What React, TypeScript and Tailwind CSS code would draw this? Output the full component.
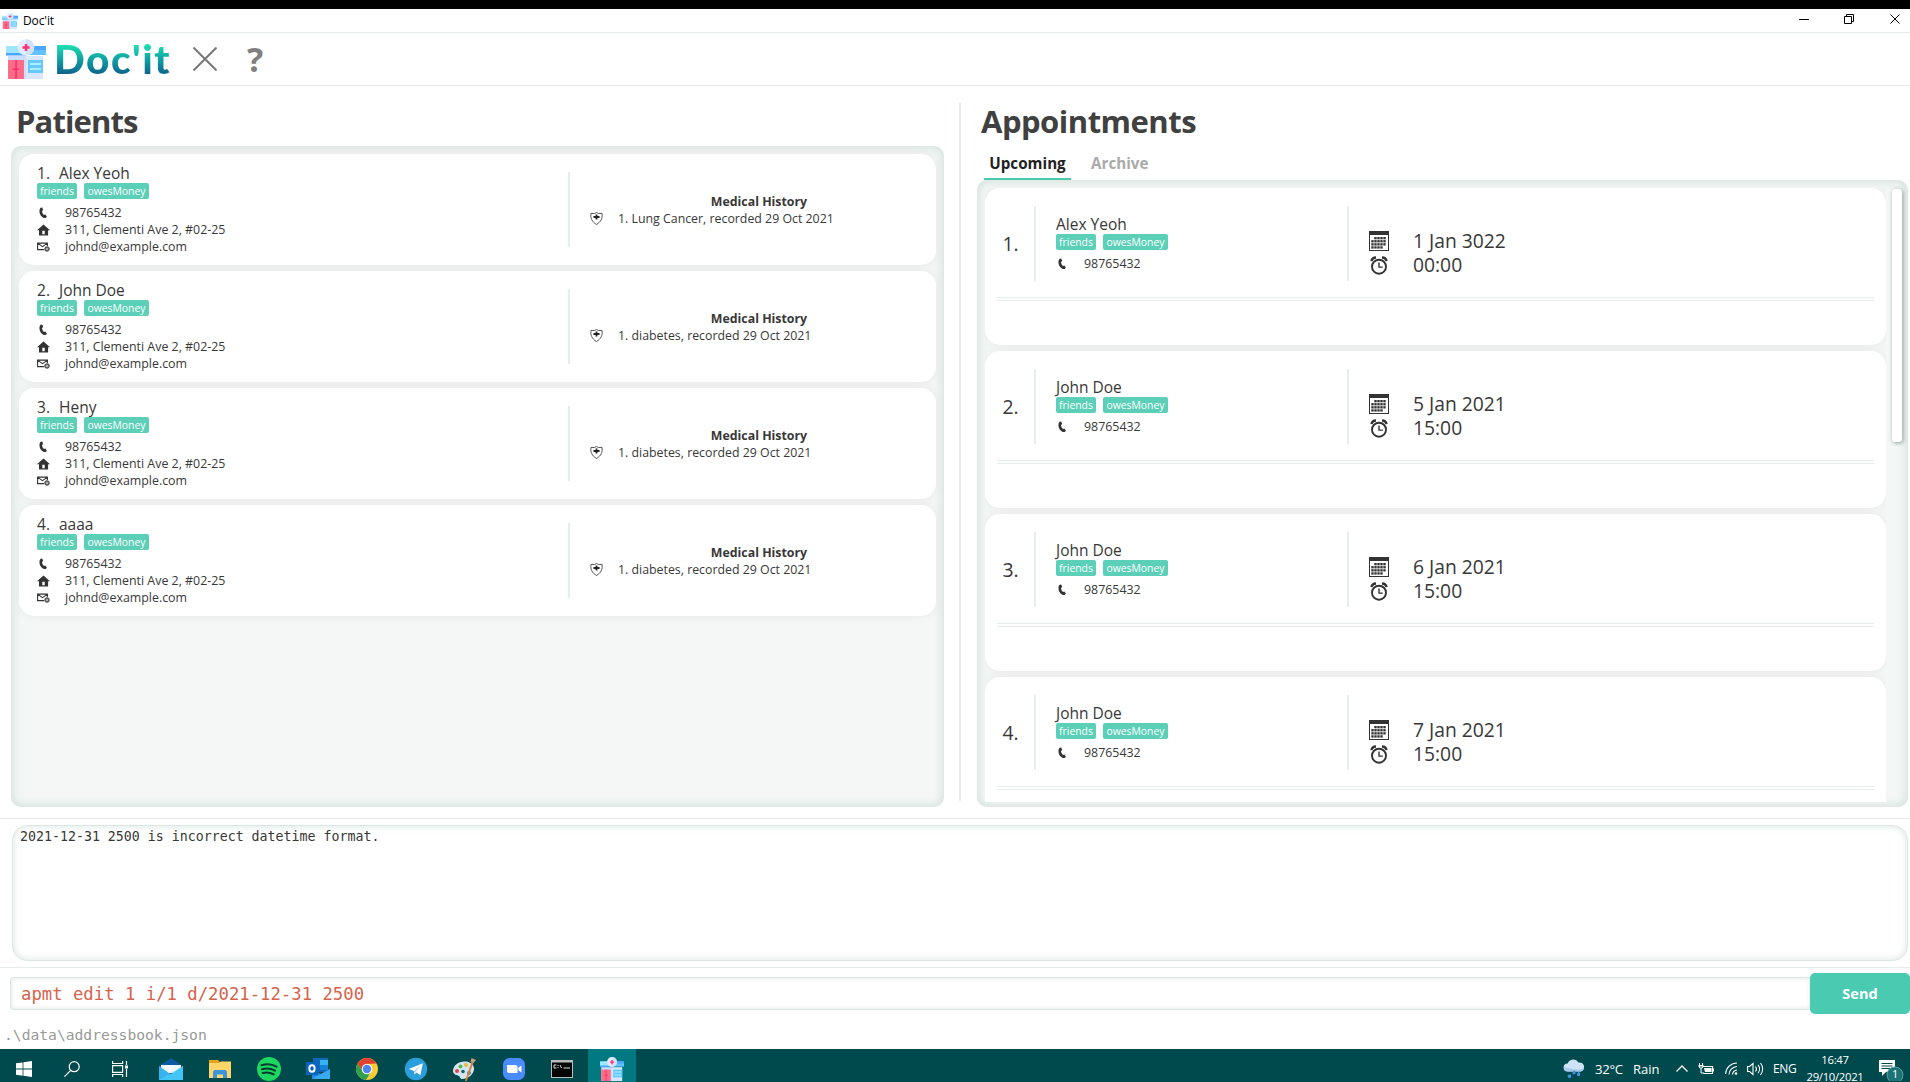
import React from "react";

const SANS = "font-['Open_Sans','Noto_Sans',sans-serif]";

const patients = [
  { name: "Alex Yeoh", history: "Lung Cancer, recorded 29 Oct 2021" },
  { name: "John Doe", history: "diabetes, recorded 29 Oct 2021" },
  { name: "Heny", history: "diabetes, recorded 29 Oct 2021" },
  { name: "aaaa", history: "diabetes, recorded 29 Oct 2021" },
];

const appointments = [
  { name: "Alex Yeoh", date: "1 Jan 3022", time: "00:00" },
  { name: "John Doe", date: "5 Jan 2021", time: "15:00" },
  { name: "John Doe", date: "6 Jan 2021", time: "15:00" },
  { name: "John Doe", date: "7 Jan 2021", time: "15:00" },
];

function ClinicIcon({ className }: { className: string }) {
  return (
    <svg viewBox="0 0 40 40" className={className}>
      <path d="M2 17h18v23H2z" fill="#c9deff" />
      <path d="M20 17h17v23H20z" fill="#d9e7fd" />
      <path d="M2 21h16v19H2z" fill="#ff6c87" />
      <path d="M9.3 21h1.600v19H9.300z" fill="#ff2f70" />
      <path d="M7 29.300h6v1.800H7z" fill="#ff2f70" />
      <path d="M22 21h15v13H22z" fill="#66c8ff" />
      <path d="M24 24h11v2H24zM24 29h11v2H24z" fill="#a9f0ff" />
      <path d="M0 7h20v9H0z" fill="#9fe6ff" />
      <path d="M20 7h20v9H20z" fill="#62c2ff" />
      <path d="M0 14h20v2.500H0zM20 7h20v4H20z" fill="#4aa5fb" />
      <circle cx="20" cy="8.400" r="8.200" fill="#e1ecff" />
      <path d="M20 .2a8.200 8.200 0 0 1 0 16.400z" fill="#cfe0fb" />
      <path d="M18.800 5h2.400v7h-2.400zM16.500 7.300h7v2.400h-7z" fill="#ff2f70" />
    </svg>
  );
}

function PhoneIcon() {
  return (
    <svg viewBox="0 0 12 12" className="h-3 w-3" fill="#333">
      <path d="M3.600.8 5.200.4l1 2.700-1.200 1c.1 1.500.8 2.900 1.900 3.900l1.500-.4 1.500 2.100-1.200 1.400C5.600 11.200 2.600 8.300 2.500 4.400 2.400 2.900 2.800 1.500 3.600.8z" />
    </svg>
  );
}

function HouseIcon() {
  return (
    <svg viewBox="0 0 13 12" className="h-3 w-[13px]" fill="#333">
      <path d="M6.500.4 13 6.200h-1.900v5.300H2V6.200H0zM5.300 6.700v3.600h2.400V6.700z" fillRule="evenodd" />
    </svg>
  );
}

function MailIcon() {
  return (
    <svg viewBox="0 0 13 10" className="h-[10px] w-[13px]" fill="none" stroke="#333">
      <path d="M7 7.600H.6V1.100h9.800v3M.8 1.400l4.700 3.300 4.700-3.300" strokeWidth="1.100" />
      <circle cx="10" cy="7" r="2.300" fill="#777" strokeWidth=".8" />
      <circle cx="10" cy="7" r=".6" fill="#fff" stroke="#fff" strokeWidth=".3" />
    </svg>
  );
}

function ShieldIcon() {
  return (
    <svg viewBox="0 0 13 13" className="h-[13px] w-[13px]" fill="none">
      <path d="M6.500.5 8.500 1.500 12 1.400c.8 4.600-1 8.600-5.500 11.100C2 10 .2 6 1 1.400l3.500.1z" stroke="#444" strokeWidth=".9" />
      <path d="M5.600 2.500h1.800v1.600H9.500v1.800H7.400v1.700H5.600V5.900H3.500V4.100h2.100z" fill="#222" />
    </svg>
  );
}

function CalendarIcon() {
  const rows = [
    [6, 9, 12, 15],
    [3, 6, 9, 12, 15],
    [3, 6, 9, 12, 15],
    [3, 6, 9, 12],
  ];
  return (
    <svg viewBox="0 0 20 20" className="h-5 w-5" fill="#333">
      <path d="M0 0h20v20H0zM1 4v15h18V4z" fillRule="evenodd" />
      {rows.map((cols, r) =>
        cols.map((x) => <rect key={`${r}-${x}`} x={x - 0.7} y={6 + r * 3.1} width="2.400" height="2.300" />)
      )}
    </svg>
  );
}

function ClockIcon() {
  return (
    <svg viewBox="0 0 18 19" className="h-[19px] w-[18px]" fill="none" stroke="#333">
      <circle cx="9" cy="10.700" r="7" strokeWidth="1.900" />
      <path d="M9 6.500v4.600h3.800" strokeWidth="1.400" />
      <path d="M1.500 5.200C1.800 3 3.500 1.500 6 1.500M16.500 5.200C16.200 3 14.500 1.500 12 1.500" strokeWidth="2.400" />
    </svg>
  );
}

function Tags() {
  return (
    <div className="flex h-4 gap-[7px] text-[10.400px] leading-4 text-white">
      <span className="w-10 rounded-[2px] bg-[#5bcfb8] text-center">friends</span>
      <span className="w-[65px] rounded-[2px] bg-[#5bcfb8] text-center">owesMoney</span>
    </div>
  );
}

function Field({ icon, children }: { icon: React.ReactNode; children: React.ReactNode }) {
  return (
    <div className="flex h-[17px] items-center text-[12.400px] leading-[17px]">
      <span className="flex w-7 items-center">{icon}</span>
      <span>{children}</span>
    </div>
  );
}

function PatientCard({ index, name, history }: { index: number; name: string; history: string }) {
  return (
    <div className="flex h-[111px] shrink-0 rounded-[15px] bg-white pl-[18px] shadow-[0_0_10px_#e6e8e7]">
      <div className="w-[531px] pt-[9px]">
        <div className="flex text-[15.500px] leading-5">
          <span className="w-[22px]">{index}.</span>
          <span>{name}</span>
        </div>
        <Tags />
        <div className="mt-[5px]">
          <Field icon={<PhoneIcon />}>98765432</Field>
          <Field icon={<HouseIcon />}>311, Clementi Ave 2, #02-25</Field>
          <Field icon={<MailIcon />}>johnd@example.com</Field>
        </div>
      </div>
      <div className="mt-[18px] h-[75px] w-[2px] bg-[#e6eeeb]" />
      <div className="ml-5 flex w-[338px] flex-col justify-center pt-px text-[12.350px] leading-[17.330px]">
        <div className="text-center font-bold">Medical History</div>
        <div className="flex items-center">
          <span className="w-7">
            <ShieldIcon />
          </span>
          <span>1. {history}</span>
        </div>
      </div>
    </div>
  );
}

function AppointmentCard({ index, name, date, time }: { index: number; name: string; date: string; time: string }) {
  return (
    <div className="h-[157px] shrink-0 rounded-[15px] bg-white px-3 shadow-[0_0_10px_#e6e8e7]">
      <div className="flex h-[109px] pt-[18px]">
        <div className="flex h-[75px] w-[37px] items-center pt-px pl-[5.500px] text-[19.400px]">{index}.</div>
        <div className="h-[75px] w-[2px] bg-[#e6eeeb]" />
        <div className="h-[75px] w-[311px] pt-2 pl-5">
          <div className="text-[15.500px] leading-5">{name}</div>
          <Tags />
          <div className="mt-[5px]">
            <Field icon={<PhoneIcon />}>98765432</Field>
          </div>
        </div>
        <div className="h-[75px] w-[2px] bg-[#e6eeeb]" />
        <div className="pt-[23px] pl-5 text-[19.300px] leading-6">
          <div className="flex h-6 items-center">
            <span className="w-11">
              <CalendarIcon />
            </span>
            {date}
          </div>
          <div className="flex h-6 items-center">
            <span className="w-11 pl-px">
              <ClockIcon />
            </span>
            {time}
          </div>
        </div>
      </div>
      <div className="h-1 border-y border-[#e6eeeb]" />
    </div>
  );
}

const PANEL =
  "flex flex-col gap-1.5 overflow-hidden rounded-[10px] bg-[#f4f7f6] p-2 shadow-[inset_0_0_10px_2px_#d3e1dc]";

function TitleBar() {
  return (
    <header className="flex h-6 items-center border-b border-[#e4ecea] pl-0.5">
      <ClinicIcon className="h-4 w-4" />
      <span className="ml-[5px] text-[12px] tracking-[-0.100px] text-black">Doc'it</span>
      <svg viewBox="0 0 102 12" className="mr-[9px] mb-[3px] ml-auto h-3 w-[102px]" fill="none" stroke="#000">
        <path d="M0 6.500h10M45.500 3.500h7v7h-7zM47.500 3.500v-2h7v7h-2" />
        <path d="m91.500 1.500 9 9M100.500 1.500l-9 9" />
      </svg>
    </header>
  );
}

function Toolbar() {
  return (
    <div className="flex h-[53px] items-center border-b border-[#e8eceb] pl-1.5">
      <ClinicIcon className="h-10 w-10" />
      <div className="ml-2 w-[123px] bg-linear-to-b from-[#1fdfb3] from-20% to-[#0f5f8b] to-85% bg-clip-text font-['Lato',sans-serif] text-[40.500px] leading-[46px] font-black tracking-[1.500px] text-transparent">
        Doc'it
      </div>
      <svg viewBox="0 0 24 24" className="ml-4 h-6 w-6" stroke="#777" strokeWidth="2">
        <path d="m.5.5 23 23M23.500.5l-23 23" />
      </svg>
      <span className="ml-[30px] text-[34px] leading-none font-bold text-[#808080]">?</span>
    </div>
  );
}

function TaskIcon({ children }: { children: React.ReactNode }) {
  return (
    <div className="flex w-12 justify-center">
      <svg viewBox="0 0 24 24" className="h-6 w-6" fill="none">
        {children}
      </svg>
    </div>
  );
}

function Taskbar() {
  return (
    <footer className="flex h-[33px] items-center overflow-hidden bg-[#00494d] pt-[7px] text-white">
      <div className="flex w-12 justify-center">
        <svg viewBox="0 0 16 16" className="h-4 w-4" fill="#fff">
          <path d="M0 2.300 6.600 1.400v6.200H0zM7.400 1.300 16 0v7.600H7.400zM0 8.400h6.600v6.300L0 13.800zM7.400 8.400H16V16l-8.600-1.200z" />
        </svg>
      </div>
      <div className="flex w-12 justify-center">
        <svg viewBox="0 0 16 16" className="h-4 w-4" fill="none" stroke="#fff" strokeWidth="1.200">
          <circle cx="10.200" cy="5.700" r="5" />
          <path d="M6.700 9.300.4 15.600" />
        </svg>
      </div>
      <div className="flex w-12 justify-center">
        <svg viewBox="0 0 16 16" className="h-4 w-4" fill="none" stroke="#fff" strokeWidth="1.200">
          <path d="M.6 0v2.500h10V0M.6 16v-2.500h10V16M.6 4.600h10v6.800H.6zM14.500 0v4M14.500 8v8" />
          <path d="M13 4.500h3v3h-3z" fill="#fff" stroke="none" />
        </svg>
      </div>
      <div className="w-[3px]" />
      <TaskIcon>
        <path d="M0 9 12 1l12 8v3H0z" fill="#0c59a4" />
        <path d="M2 8h20v8H2z" fill="#f4f7fa" />
        <path d="M0 9l12 8.500L24 9v14H0z" fill="#36b3f0" />
        <path d="M0 23 24 9v14z" fill="#4fd0fb" opacity=".6" />
      </TaskIcon>
      <div className="w-px" />
      <TaskIcon>
        <path d="M1 3h9l2 2h11v16H1z" fill="#e4a31c" />
        <path d="M1 6h10l2-1.500h10V21H1z" fill="#fdd56b" />
        <path d="M5 21v-6.500l1.500-1.500h11l1.500 1.500V21h-4v-3.500H9V21z" fill="#3c95dc" />
      </TaskIcon>
      <div className="w-px" />
      <TaskIcon>
        <circle cx="12" cy="12" r="12" fill="#1ed760" />
        <path d="M4.500 8.200c5-1.500 11-1 15 1.400M5 12.200c4.500-1.200 9-.8 13 1.400M5.600 16c4-1 7.500-.6 11 1.200" stroke="#003a30" strokeWidth="2.100" strokeLinecap="round" />
      </TaskIcon>
      <div className="w-px" />
      <TaskIcon>
        <path d="M7 1h15v14H7z" fill="#1266b8" />
        <path d="M14 3h8v5h-8z" fill="#37b2f3" />
        <path d="M14 8h8v5h-8z" fill="#1783d8" />
        <path d="M6 12l9 5 9-5v10H6z" fill="#1c8ae0" />
        <path d="m6 22 18-10v10z" fill="#39a9f0" />
        <path d="M0 5h12v13H0z" fill="#0a64bd" />
        <ellipse cx="6" cy="11.500" rx="2.700" ry="3.300" stroke="#fff" strokeWidth="1.900" />
      </TaskIcon>
      <div className="w-px" />
      <TaskIcon>
        <circle cx="12" cy="12" r="11" fill="#f9cb34" />
        <path d="M2.500 6.500A11 11 0 0 1 21.500 6.500L12 7l-5 7z" fill="#e0432f" />
        <path d="M2.500 6.500A11 11 0 0 0 11 23l5-8.500-8.500-.5z" fill="#2fa14f" />
        <circle cx="12" cy="12" r="5.300" fill="#fff" />
        <circle cx="12" cy="12" r="4.200" fill="#4a86ee" />
      </TaskIcon>
      <div className="w-px" />
      <TaskIcon>
        <circle cx="12" cy="12" r="11.200" fill="#2a9fdb" />
        <path d="M4.800 12 18.800 6.300 16.400 18.200l-3.900-2.700-2 2-.6-3.400z" fill="#fff" />
        <path d="m9.900 14.100 6.800-6-4.900 6.800-1.300 2.600z" fill="#bcd9ea" />
      </TaskIcon>
      <TaskIcon>
        <path d="M1 14C1 8 7 4 13.500 4.500c6 .5 9 4 8.500 8-.5 5-6 9.500-12 9.500-2 0-1.500-2-3-3S1 18 1 14z" fill="#d4e6f2" />
        <circle cx="5" cy="14" r="2" fill="#e2453c" />
        <circle cx="8.500" cy="9.500" r="2" fill="#58b947" />
        <circle cx="14" cy="8" r="2" fill="#f2b632" />
        <circle cx="11" cy="14.500" r="1.800" fill="#12626e" />
        <circle cx="17" cy="16" r="2" fill="#3f7fd0" />
        <path d="m13 24 6.500-19 2 .8L14.800 24z" fill="#d98436" />
        <path d="m18.500 5 1-4 4.500 2-2.500 3z" fill="#c9a071" />
      </TaskIcon>
      <div className="w-[2px]" />
      <TaskIcon>
        <rect x="1" y="1" width="22" height="22" rx="6.500" fill="#4a8cff" />
        <path d="M5 8h8.500a2 2 0 0 1 2 2v6H7a2 2 0 0 1-2-2zM16.300 10.800 19.500 8.500v7l-3.200-2.300z" fill="#fff" />
      </TaskIcon>
      <TaskIcon>
        <path d="M1 3h22v18H1z" fill="#b9bcbe" />
        <path d="M2 5.500h20V20H2z" fill="#050505" />
        <path d="M6.500 8H4v3h2.500M8 8v1M8 10v1M10 8l1.500 3M13.500 11H20" stroke="#ddd" strokeWidth="1" />
      </TaskIcon>
      <div className="ml-0.5 -mt-[7px] flex h-[33px] w-12 items-center justify-center bg-[#007a80] pt-[7px]">
        <ClinicIcon className="h-6 w-6" />
      </div>
      <div className="ml-auto flex items-center pr-[5px] pb-px">
        <svg viewBox="0 0 22 20" className="h-5 w-[22px]">
          <path d="M4.500 12.500a4 4 0 0 1 .2-8A6 6 0 0 1 15.500 3.500a4.600 4.600 0 0 1 2 9z" fill="#cfe3f6" />
          <path d="M4.500 12.500h13a4.500 4.500 0 0 0 3.700-3c-5 2-12 1-20.400-1.500a4 4 0 0 0 3.700 4.500z" fill="#a7c8ec" />
          <path d="M6.500 15.200a1.900 1.900 0 1 1-2 1.900c0-1 2-1.900 2-1.900zM11 11s1.800 1.500 1.600 2.800a1.600 1.600 0 0 1-3.200 0zM15.500 12.500s2 1.500 1.800 3a1.800 1.800 0 0 1-3.600 0z" fill="#3f93e4" />
        </svg>
        <span className="mt-0.5 ml-[10px] w-[38px] text-[13.200px] tracking-[-0.300px]">32°C</span>
        <span className="mt-0.5 w-[43px] text-[13px]">Rain</span>
        <svg viewBox="0 0 12 7" className="h-[7px] w-3" fill="none" stroke="#fff" strokeWidth="1.300">
          <path d="M.5 6.500 6 1l5.500 5.500" />
        </svg>
        <svg viewBox="0 0 16 12" className="ml-2.5 h-3 w-4" fill="none" stroke="#fff">
          <path d="M5 3.500h9.500v7H5.500M15.500 5.500v3" strokeWidth="1.200" />
          <path d="M6 5h7.500v4H7z" fill="#fff" stroke="none" />
          <path d="M1.500 0v2M4.500 0v2M.5 2.500h5M1 3h4v1L4 5H2L1 4zM3 5v5h3" />
        </svg>
        <svg viewBox="0 0 13 13" className="ml-[11px] h-[13px] w-[13px]" fill="none" stroke="#fff" strokeWidth="1.100">
          <path d="M.6 12A11.500 11.500 0 0 1 12 1M4 12.500a8.500 8.500 0 0 1 8-8M7.500 12.500A5 5 0 0 1 12 8" />
          <circle cx="11" cy="11.500" r="1.300" fill="#fff" stroke="none" />
        </svg>
        <svg viewBox="0 0 17 14" className="ml-[9px] h-3.5 w-[17px]" fill="none" stroke="#fff" strokeWidth="1.100">
          <path d="M.6 4.500h2L6 1.500v11L2.600 9.500h-2zM8.500 4.500a4 4 0 0 1 0 5M11 2.800a6.500 6.500 0 0 1 0 8.400M13.500 1a9.500 9.500 0 0 1 0 12" />
        </svg>
        <span className="ml-[9px] w-6 text-[12px] tracking-[-0.400px]">ENG</span>
        <div className="ml-[6px] -mt-px w-[64px] text-center text-[11.300px] leading-[17px] tracking-[-0.300px]">
          <div>16:47</div>
          <div>29/10/2021</div>
        </div>
        <div className="relative ml-3 h-6 w-[26px]">
          <svg viewBox="0 0 26 24" className="h-6 w-[26px]" fill="none">
            <path d="M0 3h16v12H7l-4 4v-4H0z" fill="#fff" />
            <path d="M2.500 6.500h11M2.500 9h11M2.500 11.500h11" stroke="#00494d" />
            <circle cx="16" cy="18" r="8" fill="#1c7377" stroke="#5c9da0" />
          </svg>
          <span className="absolute top-[9px] left-[13px] text-[11px] leading-4">1</span>
        </div>
      </div>
    </footer>
  );
}

export default function App() {
  return (
    <div className={`flex h-[1082px] w-[1910px] flex-col overflow-hidden border-t-[9px] border-black bg-white text-[#383838] ${SANS}`}>
      <TitleBar />
      <Toolbar />
      <main className="flex h-[732px] shrink-0 pt-4">
        <section className="w-[959px] pl-[11px]">
          <h1 className="h-11 pl-[5px] text-[31px] leading-[39px] font-bold tracking-[-0.900px] text-[#404040]">Patients</h1>
          <div className={`h-[661px] w-[933px] ${PANEL}`}>
            {patients.map((p, i) => (
              <PatientCard key={i} index={i + 1} {...p} />
            ))}
          </div>
        </section>
        <div className="h-[699px] w-[2px] bg-[#e6eeeb]" />
        <section className="pl-4">
          <h1 className="h-11 pl-1 text-[31px] leading-[39px] font-bold tracking-[-0.500px] text-[#404040]">Appointments</h1>
          <div className="flex h-[34px] gap-4 pl-[7px] text-[15.200px] leading-[35px] font-bold">
            <div className="w-[87px] border-b-2 border-[#48c9b0] text-center text-[#222]">Upcoming</div>
            <div className="pl-1 text-[#aaa]">Archive</div>
          </div>
          <div className={`h-[627px] w-[931px] ${PANEL} relative`}>
            <div className="flex h-[614px] w-[901px] shrink-0 flex-col gap-1.5 overflow-hidden">
              {appointments.map((a, i) => (
                <AppointmentCard key={i} index={i + 1} {...a} />
              ))}
            </div>
            <div className="absolute top-[9px] right-[6px] h-[253px] w-[10px] rounded-[3px] bg-white shadow-[1px_1px_4px_#8a9a95]" />
          </div>
        </section>
      </main>
      <div className="h-[150px] shrink-0 border-y border-[#e8eceb] pt-1.5 pl-3">
        <div className="h-[136px] w-[1896px] rounded-[15px] border border-[#dbe7e3] px-[7px] pt-[3px] font-['DejaVu_Sans_Mono',monospace] text-[13.280px] leading-4 shadow-[inset_0_0_8px_#d9e5e1]">
          2021-12-31 2500 is incorrect datetime format.
        </div>
      </div>
      <div className="flex h-[53px] shrink-0 items-center pb-0.5 pl-[10px]">
        <div className="flex h-[33px] flex-1 items-center rounded-l-[4px] border border-r-0 border-[#dbe7e3] px-2.5 pt-0.5 font-['DejaVu_Sans_Mono',monospace] text-[17.270px] text-[#d5644c] shadow-[inset_0_0_5px_#d9e5e1]">
          apmt edit 1 i/1 d/2021-12-31 2500
        </div>
        <button className="h-[41px] w-[100px] rounded-[5px] bg-[#4acab1] text-[14.500px] font-bold text-white">Send</button>
      </div>
      <div className="h-[28px] shrink-0 pl-[4px] font-['DejaVu_Sans_Mono',monospace] text-[14.650px] leading-[28px] text-[#999]">.\data\addressbook.json</div>
      <Taskbar />
    </div>
  );
}
